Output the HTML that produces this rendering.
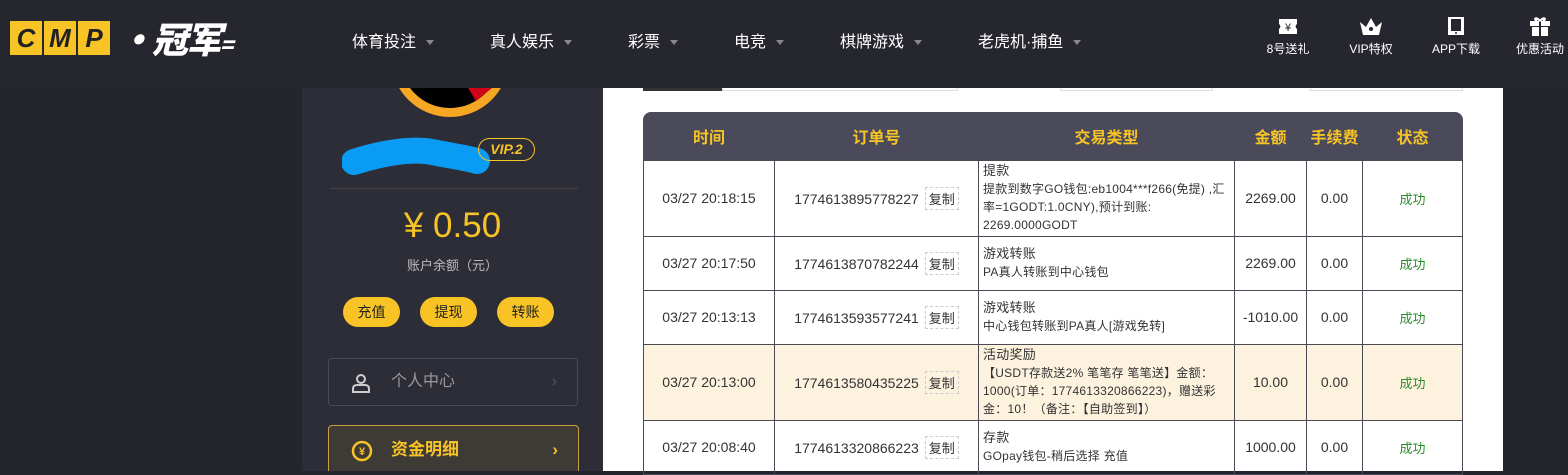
<!DOCTYPE html>
<html><head><meta charset="utf-8"><style>
*{margin:0;padding:0;box-sizing:border-box}
body{width:1568px;height:471px;overflow:hidden;background:#25252e;font-family:"Liberation Sans","Noto Sans CJK SC",sans-serif;position:relative}
.hdr{position:absolute;left:0;top:0;width:1568px;height:88px;background:#26262f;z-index:5}
.logo{position:absolute;left:10px;top:21px;display:flex}
.logo .b{width:32px;height:34px;background:#f7c325;margin-right:2px;font:italic 900 26px "Liberation Sans",sans-serif;color:#222;text-align:center;line-height:34px}
.nav{position:absolute;top:28px;color:#fff;font-size:16px}
.nav i{display:inline-block;width:0;height:0;border-left:4px solid transparent;border-right:4px solid transparent;border-top:5px solid #888;margin-left:10px;vertical-align:middle}
.ri{position:absolute;top:16px;color:#fff;font-size:12px;text-align:center;width:80px}
.ri svg{display:block;margin:0 auto 4px}
.side{position:absolute;left:302px;top:88px;width:301px;height:383px;background:#2d2d38;overflow:hidden}
.main{position:absolute;left:603px;top:88px;width:900px;height:383px;background:#fff}
.btn{position:absolute;top:297px;width:57px;height:30px;border-radius:15px;background:#f7c325;color:#222;font-size:14px;text-align:center;line-height:30px}
table{position:absolute;left:643px;top:112px;width:820px;border-collapse:collapse;font-size:14px;color:#333;table-layout:fixed}
th{color:#f7c325;height:48px;font-size:16px;font-weight:bold}
td{border:1px solid #4a4a55;text-align:center;white-space:nowrap}
td.t{text-align:left;font-size:12px;line-height:18px;padding:1px 4px;white-space:normal;letter-spacing:0.25px}
td.t b{font-weight:normal;font-size:13px}
.cp{display:inline-block;border:1px dashed #ccc;padding:1px 3px;margin-left:6px;font-size:13px}
.ok{color:#2e8b2e;font-size:13px}
</style></head><body>
<div class="hdr">
 <div class="logo"><div class="b">C</div><div class="b">M</div><div class="b">P</div>
 <span style="color:#fff;font:italic 900 36px 'Noto Sans CJK SC',sans-serif;line-height:34px;margin-left:6px;letter-spacing:-2px">·冠军<span style="font-size:22px">=</span></span></div>
 <div class="nav" style="left:352px">体育投注<i></i></div>
 <div class="nav" style="left:490px">真人娱乐<i></i></div>
 <div class="nav" style="left:628px">彩票<i></i></div>
 <div class="nav" style="left:734px">电竞<i></i></div>
 <div class="nav" style="left:840px">棋牌游戏<i></i></div>
 <div class="nav" style="left:978px">老虎机·捕鱼<i></i></div>
 <div class="ri" style="left:1248px"><svg width="22" height="20"><path d="M2 3h18v5a3 3 0 0 0 0 5v5H2v-5a3 3 0 0 0 0-5z" fill="#fff"/><text x="11" y="15" font-size="11" text-anchor="middle" fill="#26262f">¥</text></svg>8号送礼</div>
 <div class="ri" style="left:1331px"><svg width="26" height="20"><path d="M2 6l6 5 5-9 5 9 6-5-3 13H5z" fill="#fff"/><circle cx="13" cy="13" r="2" fill="#26262f"/></svg>VIP特权</div>
 <div class="ri" style="left:1416px"><svg width="18" height="20"><rect x="1" y="1" width="16" height="18" fill="#fff"/><rect x="4" y="3" width="10" height="12" fill="#26262f"/><circle cx="9" cy="17" r="1" fill="#26262f"/></svg>APP下载</div>
 <div class="ri" style="left:1500px"><svg width="22" height="20"><rect x="1" y="5" width="20" height="5" fill="#fff"/><rect x="3" y="11" width="16" height="9" fill="#fff"/><rect x="10" y="5" width="2" height="15" fill="#26262f"/><path d="M11 5C7 0 4 3 8 5M11 5c4-5 7-2 3 0" stroke="#fff" stroke-width="2" fill="none"/></svg>优惠活动</div>
</div>
<div class="side">
 <svg style="position:absolute;left:90px;top:-60px" width="120" height="90"><circle cx="58" cy="30" r="56" fill="#f5a623"/><circle cx="58" cy="30" r="50" fill="#000"/><path d="M58 30L120 0 100 60 84 73z" fill="#d0021b"/><circle cx="58" cy="30" r="56" fill="none" stroke="#f5a623" stroke-width="6"/></svg>
 <svg style="position:absolute;left:40px;top:40px" width="150" height="50"><path d="M12 34C40 25 70 20 90 24 110 28 125 30 135 33" stroke="#0a9cf5" stroke-width="26" stroke-linecap="round" fill="none"/></svg>
 <div style="position:absolute;left:176px;top:50px;width:57px;height:23px;border:1px solid #f7c325;border-radius:12px;color:#f7c325;font:italic bold 14px 'Liberation Sans';text-align:center;line-height:21px">VIP.2</div>
 <div style="position:absolute;left:28px;top:100px;width:248px;height:1px;background:#444"></div>
 <div style="position:absolute;left:0;width:301px;top:118px;text-align:center;color:#f7c325;font-size:35px">¥ 0.50</div>
 <div style="position:absolute;left:0;width:301px;top:167px;text-align:center;color:#bbb;font-size:13px">账户余额（元）</div>
 <div style="position:absolute;left:26px;top:270px;width:250px;height:48px;border:1px solid #4a4a58;border-radius:4px;color:#999;font-size:16px;line-height:46px;padding-left:62px">个人中心<span style="position:absolute;right:20px;color:#555">›</span>
 <svg style="position:absolute;left:22px;top:14px" width="20" height="20"><circle cx="10" cy="6" r="4" stroke="#ccc" stroke-width="2" fill="none"/><path d="M2 19v-3q0-4 4-4h8q4 0 4 4v3z" stroke="#ccc" stroke-width="2" fill="none"/></svg></div>
 <div style="position:absolute;left:26px;top:337px;width:251px;height:50px;border:1px solid #c8a040;border-radius:4px;background:#3e3a36;color:#f7c325;font-size:17px;font-weight:bold;line-height:48px;padding-left:62px">资金明细<span style="position:absolute;right:20px">›</span>
 <svg style="position:absolute;left:22px;top:14px" width="22" height="22"><circle cx="11" cy="11" r="9" stroke="#f7c325" stroke-width="2.5" fill="none"/><text x="11" y="15" font-size="11" text-anchor="middle" fill="#f7c325">¥</text></svg></div>
</div>
<div class="btn" style="left:343px">充值</div><div class="btn" style="left:420px">提现</div><div class="btn" style="left:497px">转账</div>
<div class="main">
 <div style="position:absolute;left:40px;top:0;width:79px;height:3px;background:#333"></div>
 <div style="position:absolute;left:119px;top:0;width:236px;height:3px;border:1px solid #ddd;border-top:0"></div>
 <div style="position:absolute;left:457px;top:0;width:153px;height:3px;border:1px solid #ddd;border-top:0"></div>
 <div style="position:absolute;left:707px;top:0;width:153px;height:3px;border:1px solid #ddd;border-top:0"></div>
</div>
<div style="position:absolute;left:643px;top:112px;width:820px;height:48px;background:#4a4a5a;border-radius:8px 8px 0 0"></div>
<table>
<colgroup><col style="width:131px"><col style="width:204px"><col style="width:256px"><col style="width:72px"><col style="width:56px"><col></colgroup>
<tr><th>时间</th><th>订单号</th><th>交易类型</th><th>金额</th><th>手续费</th><th>状态</th></tr>
<tr style="height:76px"><td>03/27 20:18:15</td><td>1774613895778227<span class="cp">复制</span></td><td class="t"><b>提款</b><br>提款到数字GO钱包:eb1004***f266(免提) ,汇率=1GODT:1.0CNY),预计到账:<br>2269.0000GODT</td><td>2269.00</td><td>0.00</td><td class="ok">成功</td></tr>
<tr style="height:54px"><td>03/27 20:17:50</td><td>1774613870782244<span class="cp">复制</span></td><td class="t"><b>游戏转账</b><br>PA真人转账到中心钱包</td><td>2269.00</td><td>0.00</td><td class="ok">成功</td></tr>
<tr style="height:54px"><td>03/27 20:13:13</td><td>1774613593577241<span class="cp">复制</span></td><td class="t"><b>游戏转账</b><br>中心钱包转账到PA真人[游戏免转]</td><td>-1010.00</td><td>0.00</td><td class="ok">成功</td></tr>
<tr style="height:76px;background:#fcf2de"><td>03/27 20:13:00</td><td>1774613580435225<span class="cp">复制</span></td><td class="t"><b>活动奖励</b><br>【USDT存款送2% 笔笔存 笔笔送】金额：<br>1000(订单：1774613320866223)，赠送彩<br>金：10！（备注：【自助签到】）</td><td>10.00</td><td>0.00</td><td class="ok">成功</td></tr>
<tr style="height:54px"><td>03/27 20:08:40</td><td>1774613320866223<span class="cp">复制</span></td><td class="t"><b>存款</b><br>GOpay钱包-稍后选择 充值</td><td>1000.00</td><td>0.00</td><td class="ok">成功</td></tr>
</table>
</body></html>
